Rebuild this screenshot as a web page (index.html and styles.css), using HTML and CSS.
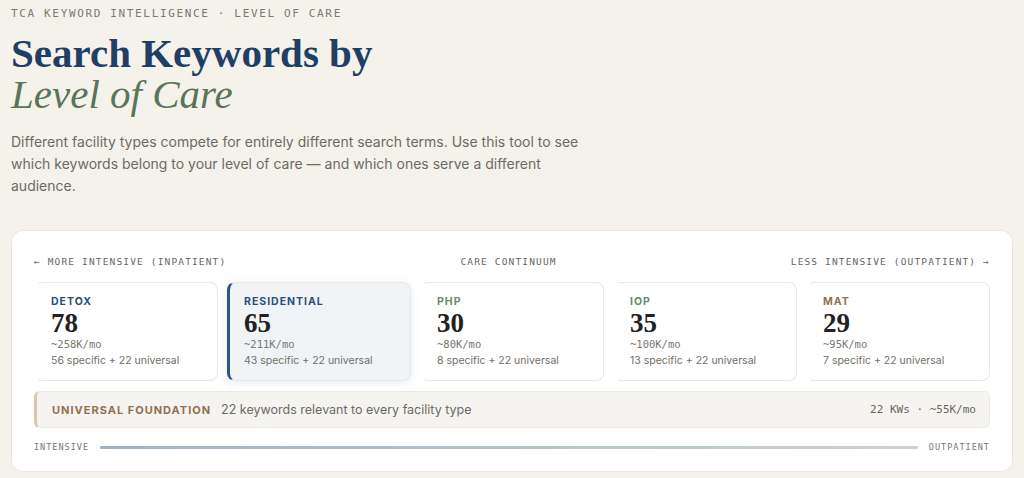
FILE: index.html
```html
<!DOCTYPE html>
<html lang="en">
<head>
    <meta charset="UTF-8">
    <meta name="viewport" content="width=device-width, initial-scale=1.0">
    <title>Search Keywords by Level of Care</title>
    <link rel="stylesheet" href="styles.css">
</head>
<body>
    <header class="intro">
        <div class="eyebrow">TCA KEYWORD INTELLIGENCE · LEVEL OF CARE</div>
        <h1><span class="h1-main">Search Keywords by</span><em>Level of Care</em></h1>
        <p class="lede">Different facility types compete for entirely different search terms. Use this tool to see which keywords belong to your level of care — and which ones serve a different audience.</p>
    </header>
    <main class="panel">
        <div class="continuum-head">
            <span>← MORE INTENSIVE (INPATIENT)</span>
            <span>CARE CONTINUUM</span>
            <span>LESS INTENSIVE (OUTPATIENT) →</span>
        </div>
        <div class="levels">
            <div class="level">
                <div class="level-name detox">DETOX</div>
                <div class="level-count">78</div>
                <div class="level-vol">~258K/mo</div>
                <div class="level-split">56 specific + 22 universal</div>
            </div>
            <div class="level active">
                <div class="level-name residential">RESIDENTIAL</div>
                <div class="level-count">65</div>
                <div class="level-vol">~211K/mo</div>
                <div class="level-split">43 specific + 22 universal</div>
            </div>
            <div class="level">
                <div class="level-name php">PHP</div>
                <div class="level-count">30</div>
                <div class="level-vol">~80K/mo</div>
                <div class="level-split">8 specific + 22 universal</div>
            </div>
            <div class="level">
                <div class="level-name iop">IOP</div>
                <div class="level-count">35</div>
                <div class="level-vol">~100K/mo</div>
                <div class="level-split">13 specific + 22 universal</div>
            </div>
            <div class="level">
                <div class="level-name mat">MAT</div>
                <div class="level-count">29</div>
                <div class="level-vol">~95K/mo</div>
                <div class="level-split">7 specific + 22 universal</div>
            </div>
        </div>
        <div class="foundation">
            <span class="foundation-title">UNIVERSAL FOUNDATION</span>
            <span class="foundation-desc">22 keywords relevant to every facility type</span>
            <span class="foundation-stats">22 KWs · ~55K/mo</span>
        </div>
        <div class="scale">
            <span>INTENSIVE</span>
            <div class="scale-line"></div>
            <span>OUTPATIENT</span>
        </div>
    </main>
</body>
</html>
```

FILE: styles.css
```css
body {
    font-family: Inter, "Noto Sans", sans-serif;
    margin: 0;
    padding: 0 11px;
    background-color: #f5f2ec;
    color: #333;
}
.intro {
    padding-top: 7px;
}
.eyebrow {
    font-family: "DejaVu Sans Mono", monospace;
    font-size: 11px;
    letter-spacing: 1.65px;
    color: #7a7a72;
}
h1 {
    font-family: "Liberation Serif", serif;
    font-size: 41px;
    line-height: 41px;
    font-weight: bold;
    color: #1f3f66;
    margin: 13px 0 0;
}
h1 .h1-main,
h1 em {
    display: block;
}
h1 em {
    font-weight: normal;
    color: #5b7558;
}
.lede {
    max-width: 580px;
    font-size: 14px;
    line-height: 22px;
    color: #6b6b66;
    margin: 16px 0 0;
}
.panel {
    margin-top: 33px;
    background: white;
    border: 1px solid #ebe7df;
    border-radius: 12px;
    padding: 25px 22px 19px;
}
.continuum-head {
    display: flex;
    justify-content: space-between;
    font-family: "DejaVu Sans Mono", monospace;
    font-size: 9.5px;
    letter-spacing: 1.15px;
    color: #66665f;
}
.levels {
    display: grid;
    grid-template-columns: repeat(5, 1fr);
    gap: 9px;
    margin-top: 15px;
}
.level {
    border: 1px solid #ebe7e1;
    border-left: 3px solid white;
    border-radius: 8px;
    padding: 12px 14px 13px;
    background: white;
}
.level.active {
    background: #f1f4f7;
    border-left-color: #2c5586;
    box-shadow: 0 2px 8px rgba(40, 70, 110, 0.1);
}
.level-name {
    font-size: 10.5px;
    font-weight: bold;
    letter-spacing: 1px;
}
.detox, .residential {
    color: #2a4f7c;
}
.php, .iop {
    color: #6a8a68;
}
.mat {
    color: #93704e;
}
.level-count {
    font-family: "Liberation Serif", serif;
    font-weight: bold;
    font-size: 27px;
    line-height: 27px;
    color: #222;
    margin-top: 2px;
}
.level-vol {
    font-family: "DejaVu Sans Mono", monospace;
    font-size: 10.5px;
    color: #77776f;
    margin-top: 1px;
}
.level-split {
    font-size: 10.5px;
    color: #6f6f69;
    margin-top: 4px;
}
.foundation {
    display: flex;
    align-items: center;
    margin-top: 10px;
    padding: 10px 13px 10px 15px;
    background: #f6f4f1;
    border: 1px solid #eeeae3;
    border-left: 3px solid #d8c7ad;
    border-radius: 6px;
}
.foundation-title {
    font-size: 11px;
    font-weight: bold;
    letter-spacing: 1px;
    color: #93704e;
}
.foundation-desc {
    font-size: 12.5px;
    color: #6b6b66;
    margin-left: 10px;
}
.foundation-stats {
    margin-left: auto;
    font-family: "DejaVu Sans Mono", monospace;
    font-size: 11px;
    color: #66665f;
}
.scale {
    display: flex;
    align-items: center;
    gap: 11px;
    margin-top: 14px;
    font-family: "DejaVu Sans Mono", monospace;
    font-size: 8.5px;
    letter-spacing: 1px;
    color: #77776f;
}
.scale-line {
    flex: 1;
    height: 3px;
    border-radius: 2px;
    background: linear-gradient(to right, #9fb2c6, #c9d5cc);
}
```
